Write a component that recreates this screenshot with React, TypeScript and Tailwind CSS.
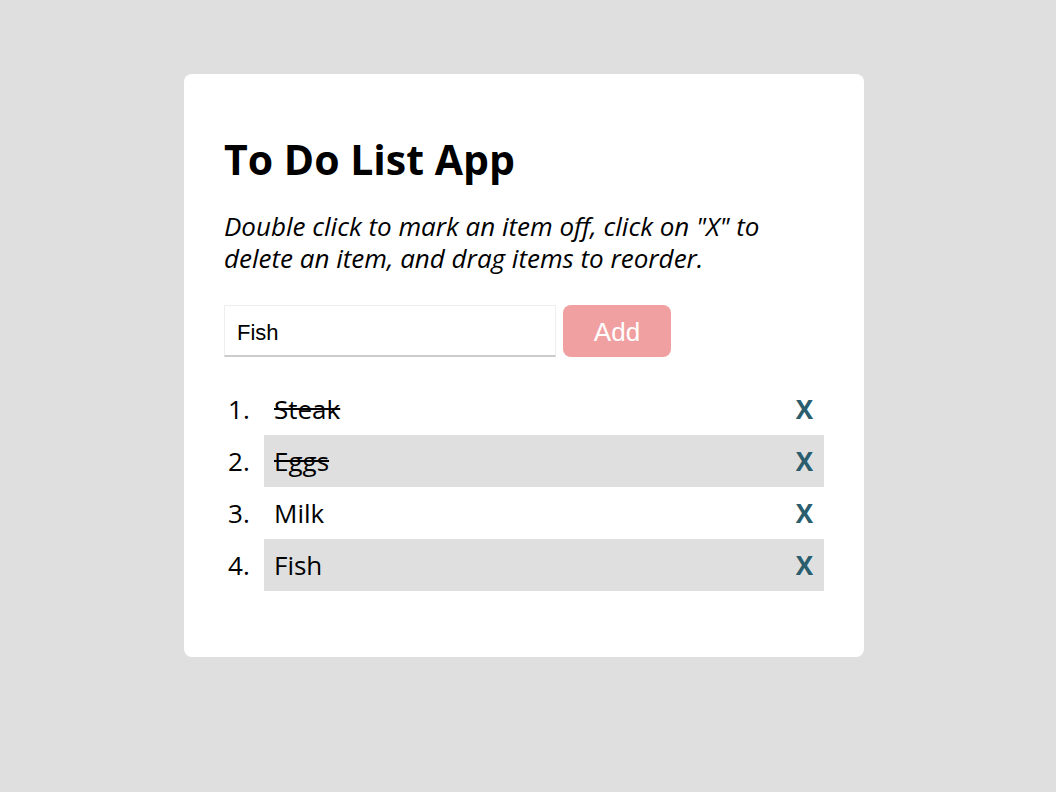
import React, { useState } from 'react';

type Item = { id: number; text: string; done: boolean };

const initial: Item[] = [
  { id: 1, text: 'Steak', done: true },
  { id: 2, text: 'Eggs', done: true },
  { id: 3, text: 'Milk', done: false },
  { id: 4, text: 'Fish', done: false },
];

export default function App() {
  const [items, setItems] = useState<Item[]>(initial);
  const [value, setValue] = useState('Fish');

  const toggle = (id: number) =>
    setItems((prev) => prev.map((it) => (it.id === id ? { ...it, done: !it.done } : it)));
  const remove = (id: number) => setItems((prev) => prev.filter((it) => it.id !== id));
  const add = () => {
    if (!value.trim()) return;
    setItems((prev) => [...prev, { id: Date.now(), text: value.trim(), done: false }]);
  };

  return (
    <div className="min-h-[792px] bg-[#dfdfdf] pt-[74px] font-['Open_Sans',sans-serif]">
      <div className="ml-[184px] w-[680px] rounded-lg bg-white px-10 pt-[58px] pb-[66px]">
        <h1 className="text-[41px] font-bold leading-[54px] text-black">To Do List App</h1>
        <p className="mt-6 text-[26px] italic leading-8 text-black">
          Double click to mark an item off, click on "X" to delete an item, and drag items to reorder.
        </p>
        <div className="mt-[31px] flex gap-[7px]">
          <input
            value={value}
            onChange={(e) => setValue(e.target.value)}
            className="h-[52px] w-[332px] border border-[#eeeeee] border-b-2 border-b-[#cccccc] px-3 pt-[5px] font-['Liberation_Sans',Arial,sans-serif] text-[22px] text-black outline-none"
          />
          <button
            onClick={add}
            className="h-[52px] w-[108px] rounded-lg bg-[#f0a0a0] pt-[3px] font-['Liberation_Sans',Arial,sans-serif] text-[26px] text-white"
          >
            Add
          </button>
        </div>
        <ol className="mt-[26px] text-[26px] text-black">
          {items.map((it, i) => (
            <li key={it.id} className="flex h-[52px] leading-[52px]">
              <span className="w-10 pl-1">{i + 1}.</span>
              <div
                onDoubleClick={() => toggle(it.id)}
                className={`flex flex-1 items-center justify-between pl-[10px] pr-[11px] ${i % 2 === 1 ? 'bg-[#dfdfdf]' : ''}`}
              >
                <span className={it.done ? 'line-through' : ''}>{it.text}</span>
                <button onClick={() => remove(it.id)} className="font-bold text-[#2a5d6e]">
                  X
                </button>
              </div>
            </li>
          ))}
        </ol>
      </div>
    </div>
  );
}
